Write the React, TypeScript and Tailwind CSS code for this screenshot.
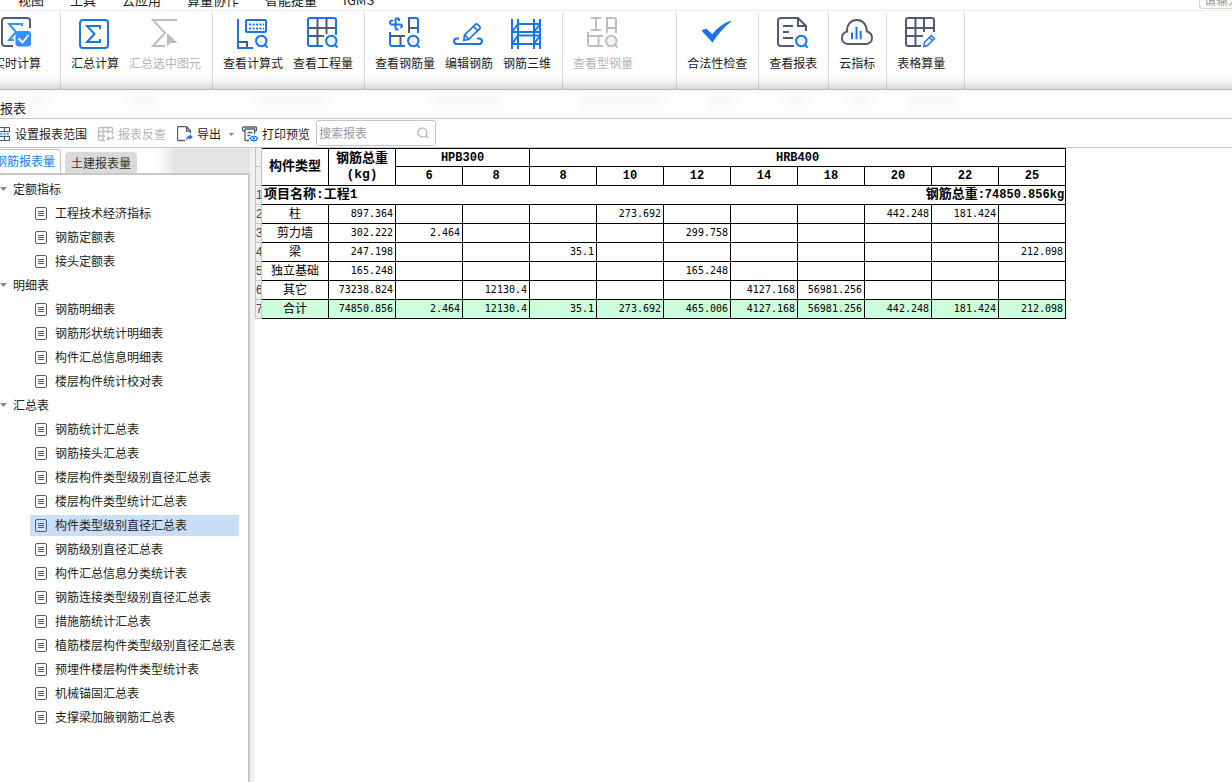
import type { ReactNode } from "react";

const BLUE = "#1a73e8";
const DARK = "#525b70";
const GRAY = "#bdbdbd";

function Icon({ children, color = BLUE }: { children: ReactNode; color?: string }) {
  return (
    <svg
      className="h-[34px] w-8 shrink-0"
      viewBox="0 0 32 34"
      fill="none"
      stroke={color}
      strokeWidth="2"
      aria-hidden="true"
    >
      {children}
    </svg>
  );
}

function Lens({ color = BLUE, cy = 25, fill = "#eef5ff" }: { color?: string; cy?: number; fill?: string }) {
  return (
    <g stroke={color}>
      <circle cx="24.3" cy={cy} r="5.2" fill={fill} />
      <path d={`M28 ${cy + 4}l2.6 2.6`} />
    </g>
  );
}

const icons = {
  realtime: (
    <Icon color={DARK}>
      <path d="M29 12V5a3 3 0 0 0-3-3H4a3 3 0 0 0-3 3v22a3 3 0 0 0 3 3h8" />
      <path d="M21 10V8H8l7 8-7 8h5" stroke="#3191ff" />
      <rect x="14.5" y="15" width="15.5" height="15.5" rx="3" fill="#3191ff" stroke="none" />
      <path d="M17.5 22.500l4 4 6-7.500" stroke="#fff" />
    </Icon>
  ),
  sum: (
    <Icon>
      <rect x="1" y="4" width="28" height="28" rx="3" />
      <path d="M21 13v-3H8l7.500 8L8 26h13v-3" />
    </Icon>
  ),
  sumSelected: (
    <Icon color={GRAY}>
      <path d="M28 4H4l12 13L4 30h12" />
      <path d="M18 17v13.500l3.500-3.500H28.500z" fill={GRAY} stroke="none" />
    </Icon>
  ),
  formula: (
    <Icon>
      <path d="M1 3v29h15" />
      <path d="M2 26h8v5" stroke={DARK} />
      <rect x="9" y="4" width="20" height="12" rx="1" />
      <path d="M12 8.500h15M12 12.500h15" strokeDasharray="2 1.500" />
      <Lens />
    </Icon>
  ),
  quantity: (
    <Icon>
      <path d="M2 12h27M2 20h15M10.500 3v26M19.500 3v15" stroke={DARK} />
      <path d="M29 19V4a2 2 0 0 0-2-2H3a2 2 0 0 0-2 2v24a2 2 0 0 0 2 2h13" />
      <Lens />
    </Icon>
  ),
  rebarQty: (
    <Icon>
      <path d="M10 5V4a1.800 1.800 0 0 0-1.800-1.800A1.800 1.800 0 0 0 6.500 4v7.500a2 2 0 0 0 2 2h1M4 4.800a2 2 0 0 0-3 1.700 1.800 1.800 0 0 0 1.800 1.900h8.500a1.700 1.700 0 0 1 1.700 1.700 1.700 1.700 0 0 1-1.700 1.400" />
      <path d="M20 17V2M20 12h9" stroke={DARK} />
      <path d="M19 2h8a2 2 0 0 1 2 2v13" />
      <path d="M2 20h14M11.500 20v10" stroke={DARK} />
      <path d="M1 16v12a2 2 0 0 0 2 2h13" />
      <Lens />
    </Icon>
  ),
  editRebar: (
    <Icon>
      <path d="M6 22.500H4a3 3 0 0 0-3 3A3 3 0 0 0 4 28h22a3 3 0 0 0 3-2.700 3 3 0 0 0-3-2.800h-2" />
      <path
        d="M10.800 24.300l.8-5.300L22.500 8.300a1.500 1.500 0 0 1 2 0l2.300 2.300a1.500 1.500 0 0 1 0 2L15.500 23.500zM20.500 10.500l4 4M12 19l3.500 4"
        strokeWidth="1.700"
      />
    </Icon>
  ),
  rebar3d: (
    <Icon>
      <path d="M1 3v30M7 3v30M23 3v30M29 3v30M7 8h22M1 16h28M7 19.500h22M1 28h28M1 16l6-8M23 16l6-8M1 28l6-8.500M23 28l6-8.500" />
    </Icon>
  ),
  steelQty: (
    <Icon color={GRAY}>
      <path d="M4 2h10M4 14h10M9 2v12M20 17V2h7a2 2 0 0 1 2 2v13M20 12h9M1 16v12a2 2 0 0 0 2 2h13M2 20h14M11.500 20v10" />
      <Lens color={GRAY} fill="#f5f5f5" />
    </Icon>
  ),
  check: (
    <Icon>
      <path
        d="M.5 14.500l4.800-2 6 5.800C16 12 22 7.500 29.500 4.800l.6.700C23 11.500 17 18 11.500 26.800z"
        fill={BLUE}
        stroke="none"
      />
    </Icon>
  ),
  report: (
    <Icon color={DARK}>
      <path d="M17 30H4a3 3 0 0 1-3-3V5a3 3 0 0 1 3-3h17l8 8v5M21 2v8h8M6 10h10M6 16h6M6 22h10" />
      <Lens />
    </Icon>
  ),
  cloud: (
    <Icon color={DARK}>
      <path d="M6.500 28a6 6 0 0 1-5.500-6c0-3 1.800-5.500 5-6.500C5.500 8.500 10 4 15.800 4S26 8.500 25.700 15.300c3.300 1 5.300 3.700 5.300 6.700a6 6 0 0 1-5.500 6z" />
      <path d="M11 16.500v6.700M15.500 11v12.200M19.700 14.700v8.500" stroke={BLUE} />
    </Icon>
  ),
  tableCalc: (
    <Icon color={DARK}>
      <path d="M16 30H3a2 2 0 0 1-2-2V4a2 2 0 0 1 2-2h24a2 2 0 0 1 2 2v12M1 12h28M1 20h17M10.500 2v28M19 2v14" />
      <path d="M18.800 30.500l.7-4.300 7-6.700 3 3-7 7zM24.500 21.500l2.800 2.800" stroke={BLUE} strokeWidth="1.400" />
    </Icon>
  ),
};

type Tool = { label: string; icon: ReactNode; disabled?: boolean };

const groups: { tools: Tool[]; pad: string }[] = [
  {
    tools: [
      { label: "汇总计算", icon: icons.sum },
      { label: "汇总选中图元", icon: icons.sumSelected, disabled: true },
    ],
    pad: "pr-[11px]",
  },
  {
    tools: [
      { label: "查看计算式", icon: icons.formula },
      { label: "查看工程量", icon: icons.quantity },
    ],
    pad: "pr-[11px]",
  },
  {
    tools: [
      { label: "查看钢筋量", icon: icons.rebarQty },
      { label: "编辑钢筋", icon: icons.editRebar },
      { label: "钢筋三维", icon: icons.rebar3d },
    ],
    pad: "pr-[11px]",
  },
  { tools: [{ label: "查看型钢量", icon: icons.steelQty, disabled: true }], pad: "pr-[43px]" },
  { tools: [{ label: "合法性检查", icon: icons.check }], pad: "pr-[11px]" },
  { tools: [{ label: "查看报表", icon: icons.report }], pad: "pr-[11px]" },
  { tools: [{ label: "云指标", icon: icons.cloud }], pad: "pr-[11px]" },
  { tools: [{ label: "表格算量", icon: icons.tableCalc }], pad: "pr-[19px]" },
];

function ToolButton({ label, icon, disabled }: Tool) {
  return (
    <button
      type="button"
      disabled={disabled}
      className="flex shrink-0 flex-col items-center gap-1 text-[12px] leading-[18px] whitespace-nowrap text-[#222] disabled:text-[#b4b4b4]"
    >
      {icon}
      {label}
    </button>
  );
}

const menus = ["视图", "工具", "云应用", "算量协作", "智能提量", "IGMS"];

const tree = [
  { title: "定额指标", items: ["工程技术经济指标", "钢筋定额表", "接头定额表"] },
  { title: "明细表", items: ["钢筋明细表", "钢筋形状统计明细表", "构件汇总信息明细表", "楼层构件统计校对表"] },
  {
    title: "汇总表",
    items: [
      "钢筋统计汇总表",
      "钢筋接头汇总表",
      "楼层构件类型级别直径汇总表",
      "楼层构件类型统计汇总表",
      "构件类型级别直径汇总表",
      "钢筋级别直径汇总表",
      "构件汇总信息分类统计表",
      "钢筋连接类型级别直径汇总表",
      "措施筋统计汇总表",
      "植筋楼层构件类型级别直径汇总表",
      "预埋件楼层构件类型统计表",
      "机械锚固汇总表",
      "支撑梁加腋钢筋汇总表",
    ],
  },
];
const selected = "构件类型级别直径汇总表";

const diameters = ["6", "8", "8", "10", "12", "14", "18", "20", "22", "25"];
const rows: [string, string[]][] = [
  ["柱", ["897.364", "", "", "", "273.692", "", "", "", "442.248", "181.424", ""]],
  ["剪力墙", ["302.222", "2.464", "", "", "", "299.758", "", "", "", "", ""]],
  ["梁", ["247.198", "", "", "35.1", "", "", "", "", "", "", "212.098"]],
  ["独立基础", ["165.248", "", "", "", "", "165.248", "", "", "", "", ""]],
  ["其它", ["73238.824", "", "12130.4", "", "", "", "4127.168", "56981.256", "", "", ""]],
  ["合计", ["74850.856", "2.464", "12130.4", "35.1", "273.692", "465.006", "4127.168", "56981.256", "442.248", "181.424", "212.098"]],
];

function DocIcon() {
  return (
    <svg className="h-[13px] w-3 shrink-0" viewBox="0 0 12 13" fill="none" stroke={DARK} aria-hidden="true">
      <rect x=".5" y=".5" width="11" height="12" rx="1.500" />
      <path d="M3 4.500h6M3 6.500h6M3 8.500h6" />
    </svg>
  );
}

function RowHead({ children }: { children?: ReactNode }) {
  return (
    <th
      scope="row"
      className="overflow-hidden border-x border-b border-[#c4c4c4] bg-[#f0f0f0] p-0 text-left font-['Liberation_Sans'] text-[12px] leading-[18px] font-normal text-[#444]"
    >
      {children}
    </th>
  );
}

const cell = "h-[19px] border-r border-b border-black p-0 leading-[16px] overflow-hidden whitespace-nowrap";

export default function App() {
  return (
    <div className="flex min-h-screen flex-col overflow-hidden bg-white font-['Noto_Sans_CJK_SC',sans-serif] text-[12px] text-[#222]">
      <nav className="flex h-[11px] items-end justify-between overflow-hidden border-b border-[#efefef]">
        <div className="flex gap-[26px] pl-[18px] text-[13px] leading-5">
          {menus.map((m) => (
            <a key={m} href="#" className="whitespace-nowrap">
              {m}
            </a>
          ))}
        </div>
        <input
          aria-label="请输入"
          placeholder="请输入"
          className="mb-px h-5 w-[33px] rounded-bl-sm border border-r-0 border-[#d8d8d8] pl-1 text-[12px] outline-none placeholder:text-[#999]"
        />
      </nav>

      <header className="relative flex h-[79px] overflow-hidden border-b border-[#b8b8b8] pt-0.5">
        <div className="flex w-[61px] shrink-0 justify-end border-r border-[#dcdcdc] pt-[3px] pr-[19px]">
          <ToolButton label="实时计算" icon={icons.realtime} />
        </div>
        {groups.map((g) => (
          <div
            key={g.tools[0].label}
            className={`flex shrink-0 items-start gap-2.5 border-r border-[#dcdcdc] pt-[3px] pl-2.5 ${g.pad}`}
          >
            {g.tools.map((t) => (
              <ToolButton key={t.label} {...t} />
            ))}
          </div>
        ))}
        <div className="pointer-events-none absolute inset-x-0 bottom-0 h-4 bg-[linear-gradient(180deg,transparent,rgba(0,0,0,0.04)_50%,rgba(0,0,0,0.15))]" />
      </header>

      <div className="relative h-[29px] overflow-hidden border-b border-[#c6c6cc] bg-[#fdfdfd]">
        <div className="absolute inset-x-0 top-1 flex h-3 opacity-[0.02] blur-xs" aria-hidden="true">
          <i className="ml-7 w-5 bg-black" />
          <i className="ml-20 w-7 bg-black" />
          <i className="ml-[100px] w-[72px] bg-black" />
          <i className="ml-[102px] w-[72px] bg-black" />
          <i className="ml-[78px] w-[84px] bg-black" />
          <i className="ml-11 w-7 bg-black" />
          <i className="ml-12 w-6 bg-black" />
          <i className="ml-10 w-6 bg-black" />
          <i className="ml-9 w-12 bg-black" />
        </div>
        <h1 className="pt-2 text-[13px] leading-5">报表</h1>
      </div>

      <div className="flex h-[29px] items-center border-b border-[#c6c6cc]">
        <button type="button" className="flex items-center gap-[5px] pt-0.5 whitespace-nowrap">
          <svg className="h-4 w-2.5" viewBox="0 0 10 16" fill="none" stroke={DARK} aria-hidden="true">
            <path d="M0 5.500h9v5H0z" fill="#d3e6ff" stroke="none" />
            <path
              d="M0 1.500h8.500a1 1 0 0 1 1 1V5.500H0M4.500 1.500v4M0 10.500h9.500v3a1 1 0 0 1-1 1H0M4.500 10.500v4"
              strokeWidth="1.200"
            />
            <path d="M0 8h9" stroke={BLUE} strokeDasharray="2 1.500" />
          </svg>
          设置报表范围
        </button>
        <button
          type="button"
          disabled
          className="ml-[11px] flex items-center gap-1 pt-0.5 whitespace-nowrap text-[#b4b4b4]"
        >
          <svg className="h-4 w-4" viewBox="0 0 16 16" fill="none" stroke={GRAY} strokeWidth="1.300" aria-hidden="true">
            <path d="M7 14.500H1.500a1 1 0 0 1-1-1v-11a1 1 0 0 1 1-1h12a1 1 0 0 1 1 1V8M.5 5.500h14M.5 10h7M5 1.500v13M10 1.500V8M15 9.500v3H9M11 10.500l-2 2 2 2" />
          </svg>
          报表反查
        </button>
        <button type="button" className="ml-[11px] flex items-center gap-1 pt-0.5 whitespace-nowrap">
          <svg className="h-4 w-4" viewBox="0 0 16 16" fill="none" stroke={DARK} strokeWidth="1.300" aria-hidden="true">
            <path d="M8 14.500H1.500a1 1 0 0 1-1-1v-12a1 1 0 0 1 1-1H9.500L13.500 5v2M9.500.5V5h4" />
            <path
              d="M9 15c0-3 1-5 3.500-5.200V8l3.300 3-3.300 3v-1.700c-1.800 0-2.700 1-3.500 2.700z"
              fill={BLUE}
              stroke="none"
            />
          </svg>
          导出
          <svg className="ml-1 h-[3px] w-[5px]" viewBox="0 0 5 3" aria-hidden="true">
            <path d="M0 0h5L2.500 3z" fill="#888" />
          </svg>
        </button>
        <button type="button" className="ml-2 flex items-center gap-1 pt-0.5 whitespace-nowrap">
          <svg className="h-4 w-4" viewBox="0 0 16 16" fill="none" stroke={DARK} strokeWidth="1.300" aria-hidden="true">
            <path d="M3 5H1.500a1 1 0 0 1-1-1V2a1 1 0 0 1 1-1h12a1 1 0 0 1 1 1v2a1 1 0 0 1-1 1H12M3 3v10.500a1 1 0 0 0 1 1h3M3 3h9.500v5M5.500 6.500h5M5.500 9.500h3" />
            <path d="M8 12.500c2-3.300 6-3.300 7.600 0-1.600 3.200-5.600 3.200-7.600 0z" fill="#fff" stroke={BLUE} />
            <circle cx="11.800" cy="12.500" r="1.200" fill={BLUE} stroke="none" />
          </svg>
          打印预览
        </button>
        <label className="ml-1.5 flex h-[26px] w-[120px] items-center rounded-[3px] border border-[#c4c4c4] bg-white pr-1.5 pl-0.5">
          <input
            aria-label="搜索报表"
            placeholder="搜索报表"
            className="min-w-0 flex-1 text-[12px] outline-none placeholder:text-[#999]"
          />
          <svg className="h-3 w-3" viewBox="0 0 12 12" fill="none" stroke="#aaa" strokeWidth="1.200" aria-hidden="true">
            <circle cx="5.500" cy="5.500" r="4.500" />
            <path d="M8.700 8.700l2.300 2.300" />
          </svg>
        </label>
      </div>

      <main className="flex flex-1">
        <aside className="flex w-[250px] shrink-0 flex-col">
          <div
            role="tablist"
            className="flex h-[25px] items-end gap-1 bg-[linear-gradient(90deg,#fff_0,#fff_156px,#e4e4e4_176px)]"
          >
            <button
              type="button"
              role="tab"
              aria-selected="true"
              className="flex h-6 w-[61px] justify-end overflow-hidden rounded-tr border-t border-r border-[#c4c4c4] bg-white pr-[5px] leading-[22px] whitespace-nowrap text-[#1a80e8]"
            >
              钢筋报表量
            </button>
            <button
              type="button"
              role="tab"
              aria-selected="false"
              className="h-[21px] w-[72px] rounded-t bg-[#dadada] leading-5 whitespace-nowrap text-[#333]"
            >
              土建报表量
            </button>
          </div>
          <div className="flex-1 border-t-2 border-r-2 border-[#c8c8c8] pt-0.5">
            {tree.map((g) => (
              <section key={g.title}>
                <h2 className="flex h-6 items-center gap-1.5">
                  <svg className="h-1 w-[7px]" viewBox="0 0 7 4" aria-hidden="true">
                    <path d="M0 0h7L3.500 4z" fill="#888" />
                  </svg>
                  {g.title}
                </h2>
                <ul>
                  {g.items.map((t) => (
                    <li key={t} className="flex h-6 items-center pr-[9px] pl-[30px]">
                      <a
                        href="#"
                        className={`flex h-[21px] flex-1 items-center gap-2 pl-[5px] whitespace-nowrap ${
                          t === selected ? "bg-[#c9dff8]" : ""
                        }`}
                      >
                        <DocIcon />
                        {t}
                      </a>
                    </li>
                  ))}
                </ul>
              </section>
            ))}
          </div>
        </aside>
        <div className="w-[5px] shrink-0 bg-[#f0f0f0]" />
        <div className="min-w-0 flex-1">
          <table className="w-[811px] table-fixed border-separate border-spacing-0 text-black font-['DejaVu_Sans_Mono','Noto_Sans_CJK_SC',monospace]">
            <colgroup>
              <col className="w-[7px]" />
              {Array.from({ length: 12 }, (_, i) => (
                <col key={i} className="w-[67px]" />
              ))}
            </colgroup>
            <thead className="font-['Liberation_Mono','Noto_Sans_CJK_SC',monospace] text-[12px] font-bold">
              <tr>
                <RowHead />
                <th rowSpan={2} className={`${cell} border-t text-[13px]`}>
                  构件类型
                </th>
                <th rowSpan={2} className={`${cell} border-t text-[13px]`}>
                  钢筋总重
                  <br />
                  (kg)
                </th>
                <th colSpan={2} className={`${cell} border-t`}>
                  HPB300
                </th>
                <th colSpan={8} className={`${cell} border-t`}>
                  HRB400
                </th>
              </tr>
              <tr>
                <RowHead />
                {diameters.map((d, i) => (
                  <th key={i} className={cell}>
                    {d}
                  </th>
                ))}
              </tr>
            </thead>
            <tbody>
              <tr className="font-['Liberation_Mono','Noto_Sans_CJK_SC',monospace] text-[12px] font-bold">
                <RowHead>1</RowHead>
                <td colSpan={12} className={cell}>
                  <div className="flex justify-between pr-px pl-0.5">
                    <span className="text-[13px]">项目名称:工程1</span>
                    <span>
                      <span className="text-[13px]">钢筋总重</span>:74850.856kg
                    </span>
                  </div>
                </td>
              </tr>
              {rows.map(([name, values], i) => (
                <tr key={name} className={name === "合计" ? "bg-[#ccffdc]" : ""}>
                  <RowHead>{i + 2}</RowHead>
                  <td className={`${cell} text-center text-[12px]`}>{name}</td>
                  {values.map((v, j) => (
                    <td key={j} className={`${cell} pr-0.5 text-right text-[10px]`}>
                      {v}
                    </td>
                  ))}
                </tr>
              ))}
            </tbody>
          </table>
        </div>
      </main>
    </div>
  );
}
